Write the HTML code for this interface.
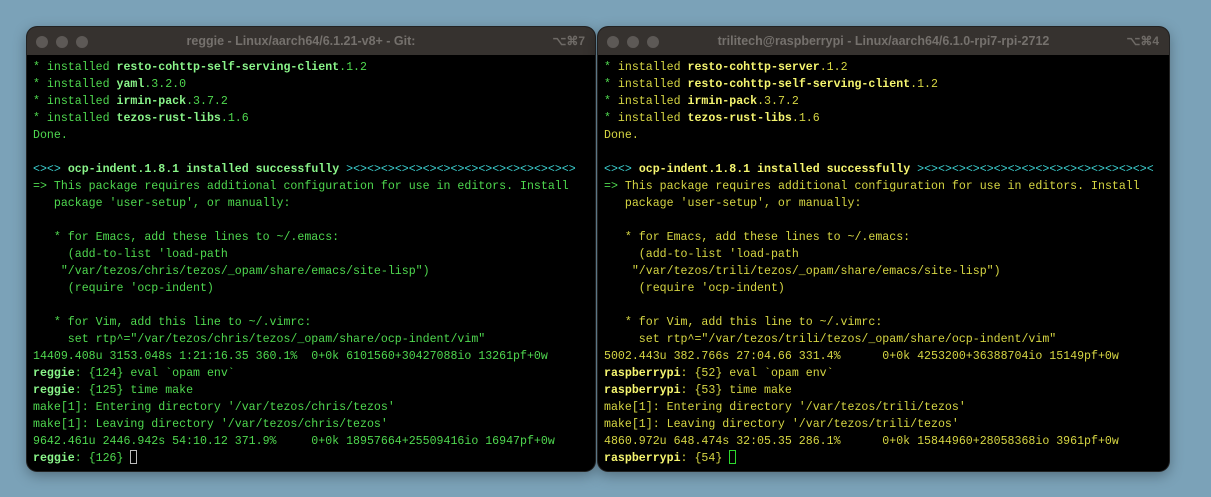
<!DOCTYPE html>
<html><head><meta charset="utf-8"><style>
html,body{margin:0;padding:0;width:1211px;height:497px;overflow:hidden;background:#7ba2b8;}
.win{position:absolute;top:27px;height:444px;background:#000;border-radius:10px;overflow:hidden;box-shadow:0 0 0 1px #222,0 4px 14px rgba(0,0,0,.35);}
.tb{height:28px;background:#36322f;position:relative;font-family:"Liberation Sans",sans-serif;font-weight:bold;font-size:12.5px;color:#75716d;text-align:center;line-height:28px;}
.dot{position:absolute;top:9px;width:12px;height:12px;border-radius:50%;background:#5d5956;}
.sc{position:absolute;right:10px;top:0;font-size:12px;color:#6e6a66;}
pre{margin:0;padding:4px 0 0 6px;font-family:"Liberation Mono",monospace;font-size:11.6px;line-height:17px;}
.g{color:#4fd84f}.gb{color:#8af58a;font-weight:bold}
.y{color:#d6d643}.yb{color:#f6f670;font-weight:bold}
.c{color:#3cd0d0}.ast{color:#4fd84f}
.cur{display:inline-block;width:7px;height:14px;border:1px solid #bbb;vertical-align:-3px;box-sizing:border-box}
.cur2{border-color:#2ed82e}
</style></head><body>
<div class="win" style="left:27px;width:568px;">
<div class="tb"><span class="dot" style="left:9px"></span><span class="dot" style="left:29px"></span><span class="dot" style="left:49px"></span><span style="position:relative;left:-10px">reggie - Linux/aarch64/6.1.21-v8+ - Git:</span><span class="sc">⌥⌘7</span></div>
<pre class="g"><span class="ast">*</span> installed <span class="gb">resto-cohttp-self-serving-client</span>.1.2
<span class="ast">*</span> installed <span class="gb">yaml</span>.3.2.0
<span class="ast">*</span> installed <span class="gb">irmin-pack</span>.3.7.2
<span class="ast">*</span> installed <span class="gb">tezos-rust-libs</span>.1.6
Done.

<span class="c">&lt;&gt;&lt;&gt;</span> <span class="gb">ocp-indent.1.8.1 installed successfully</span> <span class="c">&gt;&lt;&gt;&lt;&gt;&lt;&gt;&lt;&gt;&lt;&gt;&lt;&gt;&lt;&gt;&lt;&gt;&lt;&gt;&lt;&gt;&lt;&gt;&lt;&gt;&lt;&gt;&lt;&gt;&lt;&gt;&lt;&gt;</span>
=&gt; This package requires additional configuration for use in editors. Install
   package 'user-setup', or manually:

   * for Emacs, add these lines to ~/.emacs:
     (add-to-list 'load-path
    "/var/tezos/chris/tezos/_opam/share/emacs/site-lisp")
     (require 'ocp-indent)

   * for Vim, add this line to ~/.vimrc:
     set rtp^="/var/tezos/chris/tezos/_opam/share/ocp-indent/vim"
14409.408u 3153.048s 1:21:16.35 360.1%  0+0k 6101560+30427088io 13261pf+0w
<span class="gb">reggie</span>: {124} eval `opam env`
<span class="gb">reggie</span>: {125} time make
make[1]: Entering directory '/var/tezos/chris/tezos'
make[1]: Leaving directory '/var/tezos/chris/tezos'
9642.461u 2446.942s 54:10.12 371.9%     0+0k 18957664+25509416io 16947pf+0w
<span class="gb">reggie</span>: {126} <span class="cur"></span></pre>
</div>
<div class="win" style="left:598px;width:571px;">
<div class="tb"><span class="dot" style="left:9px"></span><span class="dot" style="left:29px"></span><span class="dot" style="left:49px"></span>trilitech@raspberrypi - Linux/aarch64/6.1.0-rpi7-rpi-2712<span class="sc">⌥⌘4</span></div>
<pre class="y"><span class="ast">*</span> installed <span class="yb">resto-cohttp-server</span>.1.2
<span class="ast">*</span> installed <span class="yb">resto-cohttp-self-serving-client</span>.1.2
<span class="ast">*</span> installed <span class="yb">irmin-pack</span>.3.7.2
<span class="ast">*</span> installed <span class="yb">tezos-rust-libs</span>.1.6
Done.

<span class="c">&lt;&gt;&lt;&gt;</span> <span class="yb">ocp-indent.1.8.1 installed successfully</span> <span class="c">&gt;&lt;&gt;&lt;&gt;&lt;&gt;&lt;&gt;&lt;&gt;&lt;&gt;&lt;&gt;&lt;&gt;&lt;&gt;&lt;&gt;&lt;&gt;&lt;&gt;&lt;&gt;&lt;&gt;&lt;&gt;&lt;&gt;&lt;</span>
<span class="ast">=&gt;</span> This package requires additional configuration for use in editors. Install
   package 'user-setup', or manually:

   * for Emacs, add these lines to ~/.emacs:
     (add-to-list 'load-path
    "/var/tezos/trili/tezos/_opam/share/emacs/site-lisp")
     (require 'ocp-indent)

   * for Vim, add this line to ~/.vimrc:
     set rtp^="/var/tezos/trili/tezos/_opam/share/ocp-indent/vim"
5002.443u 382.766s 27:04.66 331.4%      0+0k 4253200+36388704io 15149pf+0w
<span class="yb">raspberrypi</span>: {52} eval `opam env`
<span class="yb">raspberrypi</span>: {53} time make
make[1]: Entering directory '/var/tezos/trili/tezos'
make[1]: Leaving directory '/var/tezos/trili/tezos'
4860.972u 648.474s 32:05.35 286.1%      0+0k 15844960+28058368io 3961pf+0w
<span class="yb">raspberrypi</span>: {54} <span class="cur cur2"></span></pre>
</div>
</body></html>
